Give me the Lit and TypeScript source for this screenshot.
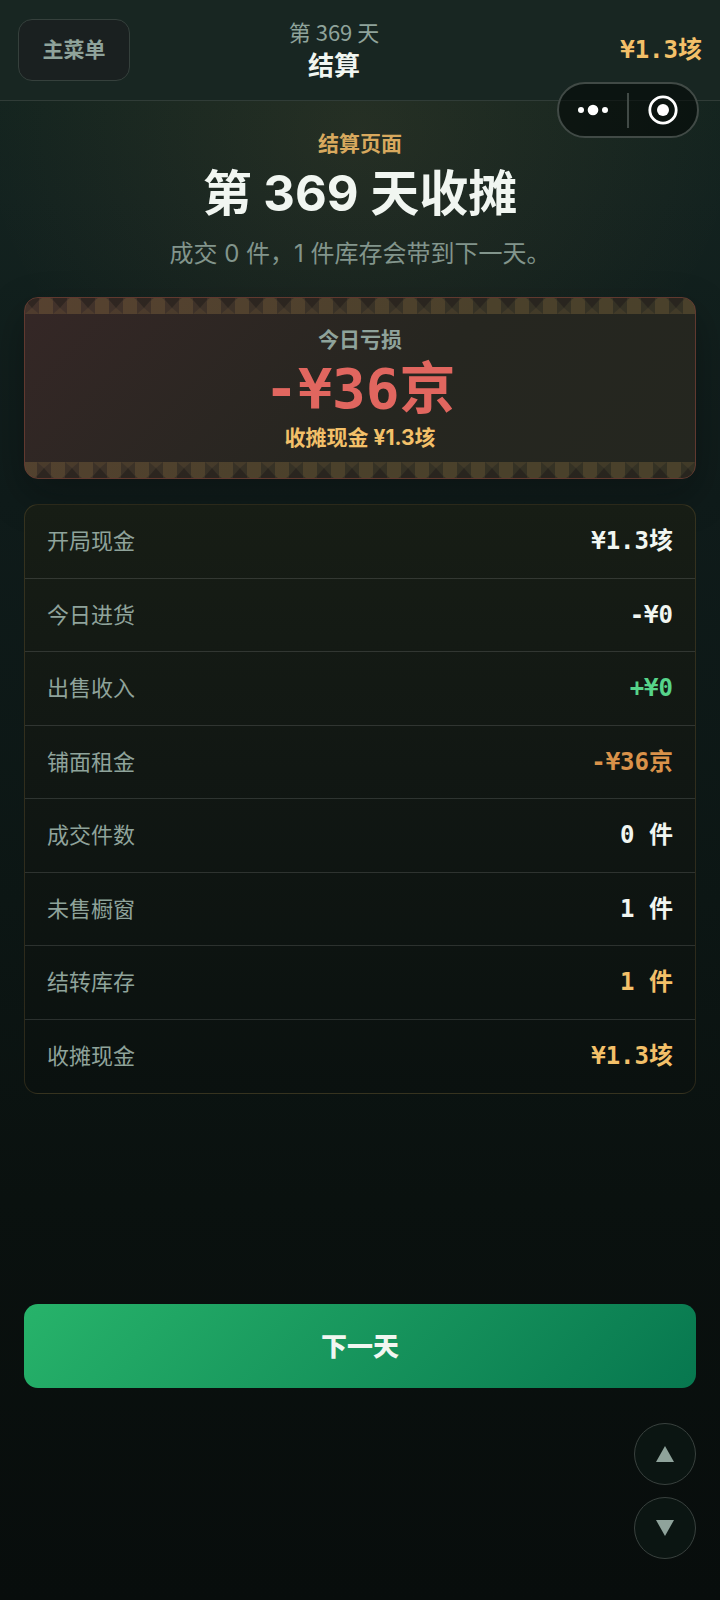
import { LitElement, html, css, svg } from "lit";
import { customElement, property } from "lit/decorators.js";

type Tone = "plain" | "gain" | "rent" | "gold";

interface LedgerRow {
  label: string;
  value: string;
  tone: Tone;
}

const ROWS: LedgerRow[] = [
  { label: "开局现金", value: "¥1.3垓", tone: "plain" },
  { label: "今日进货", value: "-¥0", tone: "plain" },
  { label: "出售收入", value: "+¥0", tone: "gain" },
  { label: "铺面租金", value: "-¥36京", tone: "rent" },
  { label: "成交件数", value: "0 件", tone: "plain" },
  { label: "未售橱窗", value: "1 件", tone: "plain" },
  { label: "结转库存", value: "1 件", tone: "gold" },
  { label: "收摊现金", value: "¥1.3垓", tone: "gold" },
];

/** Woven trim that runs along the edge of the summary card. */
@customElement("awning-trim")
export class AwningTrim extends LitElement {
  @property({ type: Boolean, reflect: true }) flipped = false;

  static styles = css`
    :host {
      display: block;
      height: 16px;
    }
    :host([flipped]) {
      rotate: 180deg;
    }
    .trim {
      display: block;
      width: 100%;
      height: 100%;
    }
  `;

  render() {
    return html`
      <svg class="trim" aria-hidden="true">
        <defs>
          <pattern id="weave" width="28" height="16" patternUnits="userSpaceOnUse">
            ${svg`
              <rect width="28" height="16" fill="#d8a657" fill-opacity=".09" />
              <path d="M0 0H14V2L7 10L0 2Z" fill="#1e1918" fill-opacity=".5" />
              <path d="M0 16L7 10L14 16Z" fill="#d8a657" fill-opacity=".08" />
              <path d="M14 16V3Q15 1 17 0H25Q27 1 28 3V16Z" fill="#d8a657" fill-opacity=".13" />
            `}
          </pattern>
        </defs>
        <rect width="100%" height="16" fill="url(#weave)" />
      </svg>
    `;
  }
}

@customElement("app-root")
export class AppRoot extends LitElement {
  static styles = css`
    :host {
      display: block;
      --ink: #f1f6f1;
      --muted: #8fa39b;
      --gold: #f3c069;
      --line: rgba(255, 255, 255, 0.13);
      font-family: Inter, "Noto Sans CJK SC", sans-serif;
      color: var(--ink);
    }
    * {
      box-sizing: border-box;
    }
    button {
      font: inherit;
      color: inherit;
      margin: 0;
      padding: 0;
      cursor: pointer;
    }
    .page {
      position: relative;
      min-height: 100vh;
      display: flex;
      flex-direction: column;
      background:
        radial-gradient(380px 330px at 50% 130px, rgba(216, 166, 87, 0.09), transparent),
        linear-gradient(180deg, #15261f 0, #13221f 200px, #0f1b1a 500px, #0c1614 900px, #0a110f 1200px, #080d0c 100%);
    }
    .bar {
      display: grid;
      grid-template-columns: 112px 1fr 164px;
      align-items: center;
      min-height: 101px;
      padding: 0 18px;
      border-bottom: 1px solid #303c37;
      background: #182622;
    }
    .menu {
      height: 62px;
      padding-bottom: 4px;
      border: 1px solid #35403c;
      border-radius: 14px;
      background: #1a2020;
      color: var(--muted);
      font-size: 21px;
      font-weight: 700;
    }
    .where {
      display: grid;
      gap: 2px;
      text-align: center;
    }
    .day {
      font-family: "Noto Sans CJK SC", sans-serif;
      font-size: 22px;
      line-height: 30px;
      color: var(--muted);
    }
    .phase {
      font-size: 26px;
      line-height: 36px;
      font-weight: 700;
    }
    .mono {
      font-family: "DejaVu Sans Mono", "Noto Sans CJK SC", monospace;
      font-weight: 700;
      line-height: 32px;
      white-space: pre;
    }
    .cash {
      font-size: 24px;
      color: var(--gold);
      text-align: right;
    }
    .capsule {
      position: absolute;
      top: 82px;
      right: 21px;
      width: 142px;
      height: 56px;
      display: grid;
      grid-template-columns: 1fr 2px 1fr;
      align-items: center;
      border: 2px solid #414a46;
      border-radius: 28px;
      background: rgba(4, 8, 7, 0.6);
    }
    .capsule button {
      height: 52px;
      border: 0;
      background: none;
      display: grid;
      place-items: center;
      color: #fff;
    }
    .split {
      height: 35px;
      background: #414a46;
    }
    .body {
      flex: 1;
      display: flex;
      flex-direction: column;
      padding: 29px 24px 212px;
    }
    .hero {
      text-align: center;
    }
    .eyebrow {
      margin: 0;
      font-size: 21px;
      line-height: 28px;
      font-weight: 700;
      color: #d8a95e;
    }
    .title {
      margin: 4px 0 10px;
      font-size: 49px;
      line-height: 64px;
      font-weight: 700;
    }
    .note {
      margin: 0 0 25px;
      font-size: 24px;
      line-height: 36px;
      color: #82958c;
    }
    .result {
      display: flex;
      flex-direction: column;
      border: 1px solid #61392f;
      border-radius: 14px;
      overflow: hidden;
      text-align: center;
      background: linear-gradient(135deg, #352726, #262620 55%, #24261f);
      box-shadow: 0 16px 40px rgba(5, 8, 7, 0.3);
    }
    .figures {
      padding: 12px 0 10px;
      font-size: 21px;
      line-height: 28px;
      font-weight: 700;
    }
    .figures p {
      margin: 0;
    }
    .kind {
      color: var(--muted);
    }
    .figures .total {
      margin: 4px 0;
      font-size: 56px;
      line-height: 62px;
      color: #e1665f;
    }
    .left {
      color: var(--gold);
    }
    .ledger {
      display: grid;
      grid-auto-rows: 1fr;
      min-height: 590px;
      margin: 25px 0 0;
      border: 1px solid rgba(216, 166, 87, 0.16);
      border-radius: 14px;
      background: linear-gradient(180deg, #171d15, #111713 45%, #0a110f);
    }
    .row {
      display: flex;
      align-items: center;
      justify-content: space-between;
      padding: 0 22px;
      border-bottom: 1px solid var(--line);
    }
    .row:last-child {
      border-bottom: 0;
    }
    .row dt {
      font-size: 22px;
      line-height: 32px;
      color: var(--muted);
    }
    .row dd {
      margin: 0;
      font-size: 24px;
    }
    .gain {
      color: #57d48a;
    }
    .rent {
      color: #d9924a;
    }
    .gold {
      color: var(--gold);
    }
    .next {
      margin-top: auto;
      height: 84px;
      padding-bottom: 4px;
      border: 0;
      border-radius: 14px;
      background: linear-gradient(135deg, #27b36a, #07774f);
      font-size: 26px;
      font-weight: 900;
    }
    .scroll {
      position: absolute;
      right: 24px;
      bottom: 41px;
      display: grid;
      gap: 12px;
    }
    .scroll button {
      width: 62px;
      height: 62px;
      display: grid;
      place-items: center;
      border: 1px solid #39413e;
      border-radius: 50%;
      background: #0b1512;
      color: #8fa39b;
    }
  `;

  render() {
    return html`
      <div class="page">
        <header class="bar">
          <button class="menu">主菜单</button>
          <div class="where">
            <div class="day">第 369 天</div>
            <div class="phase">结算</div>
          </div>
          <div class="cash mono">¥1.3垓</div>
        </header>

        <main class="body">
          <section class="hero">
            <p class="eyebrow">结算页面</p>
            <h1 class="title">第 369 天收摊</h1>
            <p class="note">成交 0 件，1 件库存会带到下一天。</p>
          </section>

          <section class="result">
            <awning-trim></awning-trim>
            <div class="figures">
              <p class="kind">今日亏损</p>
              <p class="total mono">-¥36京</p>
              <p class="left">收摊现金 ¥1.3垓</p>
            </div>
            <awning-trim flipped></awning-trim>
          </section>

          <dl class="ledger">
            ${ROWS.map(
              (row) => html`
                <div class="row">
                  <dt>${row.label}</dt>
                  <dd class="mono ${row.tone}">${row.value}</dd>
                </div>
              `
            )}
          </dl>

          <button class="next">下一天</button>
        </main>

        <div class="capsule">
          <button aria-label="更多">
            <svg width="32" height="12" viewBox="0 0 32 12" fill="currentColor">
              <circle cx="4" cy="6" r="3" />
              <circle cx="16" cy="6" r="5.3" />
              <circle cx="28" cy="6" r="3" />
            </svg>
          </button>
          <span class="split"></span>
          <button aria-label="关闭">
            <svg width="30" height="30" viewBox="0 0 30 30" fill="none">
              <circle cx="15" cy="15" r="13.2" stroke="currentColor" stroke-width="2.8" />
              <circle cx="15" cy="15" r="6" fill="currentColor" />
            </svg>
          </button>
        </div>

        <nav class="scroll">
          <button aria-label="向上">
            <svg width="18" height="16" viewBox="0 0 18 16" fill="currentColor"><path d="M9 0L18 16H0Z" /></svg>
          </button>
          <button aria-label="向下">
            <svg width="18" height="16" viewBox="0 0 18 16" fill="currentColor"><path d="M0 0H18L9 16Z" /></svg>
          </button>
        </nav>
      </div>
    `;
  }
}
